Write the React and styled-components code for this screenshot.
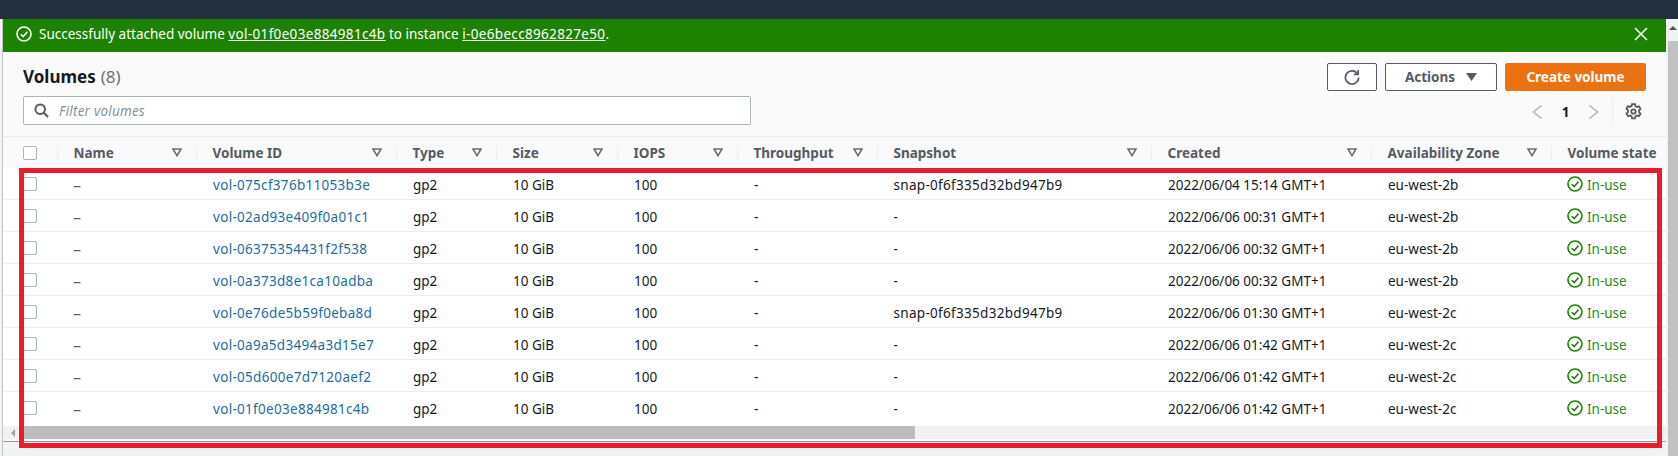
import React from "react";
import styled, { createGlobalStyle } from "styled-components";

const columns = "54px 139px 200px 100px 121px 120px 140px 274px 220px 180px 115px";

const volumes = [
  ["vol-075cf376b11053b3e", "snap-0f6f335d32bd947b9", "2022/06/04 15:14 GMT+1", "eu-west-2b"],
  ["vol-02ad93e409f0a01c1", "-", "2022/06/06 00:31 GMT+1", "eu-west-2b"],
  ["vol-06375354431f2f538", "-", "2022/06/06 00:32 GMT+1", "eu-west-2b"],
  ["vol-0a373d8e1ca10adba", "-", "2022/06/06 00:32 GMT+1", "eu-west-2b"],
  ["vol-0e76de5b59f0eba8d", "snap-0f6f335d32bd947b9", "2022/06/06 01:30 GMT+1", "eu-west-2c"],
  ["vol-0a9a5d3494a3d15e7", "-", "2022/06/06 01:42 GMT+1", "eu-west-2c"],
  ["vol-05d600e7d7120aef2", "-", "2022/06/06 01:42 GMT+1", "eu-west-2c"],
  ["vol-01f0e03e884981c4b", "-", "2022/06/06 01:42 GMT+1", "eu-west-2c"],
];

const headers = [
  ["Name", true],
  ["Volume ID", true],
  ["Type", true],
  ["Size", true],
  ["IOPS", true],
  ["Throughput", true],
  ["Snapshot", true],
  ["Created", true],
  ["Availability Zone", true],
  ["Volume state", false],
];

const GlobalStyle = createGlobalStyle`
  html, body {
    margin: 0;
    padding: 0;
    background: #f2f3f3;
  }
`;

const Page = styled.div`
  width: 1678px;
  height: 456px;
  overflow: hidden;
  position: relative;
  display: flex;
  flex-direction: column;
  font-family: "Noto Sans", sans-serif;
  font-size: 13.5px;
  color: #16191f;
`;

const TopBar = styled.div`
  height: 19px;
  flex: none;
  background: #232f3e;
`;

const Body = styled.div`
  flex: 1;
  display: flex;
  min-height: 0;
`;

const LeftEdge = styled.div`
  width: 2px;
  flex: none;
  background: #f2f3f3;
  border-right: 1px solid #c4c6c6;
`;

const Main = styled.div`
  width: 1663px;
  flex: none;
  background: #fafafa;
  display: flex;
  flex-direction: column;
`;

const PageScroll = styled.div`
  margin-left: 2px;
  width: 10px;
  flex: none;
  display: flex;
  flex-direction: column;
  background: #c1c1c1;
`;

const ScrollTop = styled.div`
  height: 22px;
  background: #f1f1f1;
  display: flex;
  justify-content: center;
  padding-top: 7px;
  box-sizing: border-box;
  &::after {
    content: "";
    width: 0;
    height: 0;
    border-left: 4px solid transparent;
    border-right: 4px solid transparent;
    border-bottom: 4px solid #505050;
  }
`;

const Banner = styled.div`
  height: 33px;
  flex: none;
  box-sizing: border-box;
  background: #1d8102;
  color: #fff;
  display: flex;
  align-items: center;
  padding: 0 18px 3px 13px;
  gap: 7px;
  font-size: 13.5px;
`;

const BannerText = styled.span`
  flex: 1;
`;

const BannerLink = styled.a`
  color: #fff;
  text-decoration: underline;
  letter-spacing: 0.33px;
`;

const Toolbar = styled.div`
  height: 85px;
  flex: none;
  box-sizing: border-box;
  padding: 11px 20px 11px 20px;
  display: flex;
  justify-content: space-between;
  border-bottom: 1px solid #eaeded;
`;

const ToolLeft = styled.div`
  display: flex;
  flex-direction: column;
  gap: 6px;
`;

const Title = styled.div`
  height: 28px;
  display: flex;
  align-items: center;
  font-size: 17px;
  font-weight: 700;
  gap: 5px;
`;

const Count = styled.span`
  font-weight: 400;
  color: #687078;
`;

const FilterBox = styled.div`
  width: 728px;
  height: 29px;
  box-sizing: border-box;
  background: #fff;
  border: 1px solid #aab7b8;
  border-radius: 2px;
  display: flex;
  align-items: center;
  padding-left: 10px;
  gap: 10px;
`;

const Placeholder = styled.span`
  font-style: italic;
  color: #879596;
  letter-spacing: 0.2px;
`;

const ToolRight = styled.div`
  display: flex;
  flex-direction: column;
  align-items: flex-end;
  gap: 6px;
`;

const Buttons = styled.div`
  display: flex;
  gap: 8px;
  height: 28px;
`;

const Button = styled.button`
  box-sizing: border-box;
  width: ${(p) => p.$width}px;
  height: 28px;
  padding: 0;
  background: #fff;
  border: 1px solid #545b64;
  border-radius: 2px;
  color: #545b64;
  font-family: inherit;
  font-size: 13.5px;
  font-weight: 700;
  display: flex;
  align-items: center;
  justify-content: center;
  gap: 11px;
`;

const PrimaryButton = styled(Button)`
  background: #ec7211;
  border-color: #ec7211;
  color: #fff;
`;

const Pager = styled.div`
  height: 29px;
  padding-right: 4px;
  display: flex;
  align-items: center;
  color: #16191f;
  font-weight: 700;
`;

const PagerNumber = styled.span`
  width: 45px;
  text-align: center;
`;

const PagerDivider = styled.span`
  width: 1px;
  height: 29px;
  background: #eaeded;
  margin: 0 12px 0 13px;
`;

const Table = styled.div`
  flex: none;
`;

const HeadRow = styled.div`
  display: grid;
  grid-template-columns: ${columns};
  height: 31px;
  align-items: center;
  background: #fafafa;
`;

const HeadCell = styled.div`
  height: 14px;
  display: flex;
  align-items: center;
  justify-content: space-between;
  padding: 0 14px 0 15.5px;
  border-left: 1px solid #eaeded;
  color: #545b64;
  font-weight: 700;
  white-space: nowrap;
`;

const CheckCell = styled.div`
  padding-left: 20px;
  display: flex;
  align-items: center;
`;

const Checkbox = styled.span`
  width: 14px;
  height: 14px;
  box-sizing: border-box;
  background: #fff;
  border: 1px solid #aab7b8;
  border-radius: 2px;
`;

const Row = styled.div`
  display: grid;
  grid-template-columns: ${columns};
  height: 32px;
  box-sizing: border-box;
  align-items: center;
  background: #fff;
  border-bottom: 1px solid #eaeded;
  &:last-child {
    border-bottom: none;
    height: 34px;
    padding-bottom: 2px;
  }
`;

const Cell = styled.div`
  padding: 2px 0 0 17px;
  white-space: nowrap;
`;

const NameCell = styled(Cell)`
  padding-left: 16px;
  font-size: 16px;
  line-height: 18px;
  color: #545b64;
`;

const SnapshotCell = styled(Cell)`
  padding-left: 16.5px;
  letter-spacing: ${(p) => (p.$id ? "0.3px" : "0")};
`;

const VolumeLink = styled.a`
  color: #1f6b9e;
  letter-spacing: 0.3px;
`;

const Status = styled(Cell)`
  display: flex;
  align-items: center;
  gap: 4px;
  padding: 0 0 0 16px;
  color: #2b8a1c;
`;

const StatusText = styled.span`
  padding-top: 2px;
`;

const BottomScroll = styled.div`
  height: 13px;
  background: #f1f1f1;
  display: flex;
  align-items: center;
`;

const ScrollLeft = styled.div`
  width: 19px;
  display: flex;
  padding-left: 8px;
  box-sizing: border-box;
  &::after {
    content: "";
    width: 0;
    height: 0;
    border-top: 4px solid transparent;
    border-bottom: 4px solid transparent;
    border-right: 4px solid #a0a0a0;
  }
`;

const ScrollThumb = styled.div`
  width: 893px;
  height: 13px;
  background: #bcbcbc;
`;

const BottomLine = styled.div`
  margin-top: 2px;
  height: 1px;
  background: #9a9d9d;
`;

const Footer = styled.div`
  flex: 1;
  background: #f2f3f3;
`;

// red annotation drawn over the screenshot
const Annotation = styled.div`
  position: absolute;
  left: 19px;
  top: 168px;
  width: 1643px;
  height: 280px;
  box-sizing: border-box;
  border: 5px solid #e81c2a;
  pointer-events: none;
`;

const CircleCheck = ({ size = 16, color = "#fff" }) => (
  <svg width={size} height={size} viewBox="0 0 16 16" fill="none" stroke={color} strokeWidth="1.6">
    <circle cx="8" cy="8" r="7" />
    <path d="M4.8 8.2 7.2 10.6 11.4 5.8" />
  </svg>
);

const CloseIcon = () => (
  <svg width="14" height="14" viewBox="0 0 14 14" fill="none" stroke="#fff" strokeWidth="1.5">
    <path d="M1 1 13 13M13 1 1 13" />
  </svg>
);

const SearchIcon = () => (
  <svg width="15" height="15" viewBox="0 0 15 15" fill="none" stroke="#545b64" strokeWidth="2">
    <circle cx="6.2" cy="6.2" r="4.8" />
    <path d="M9.8 9.8 14 14" />
  </svg>
);

const RefreshIcon = () => (
  <svg width="16" height="16" viewBox="0 0 16 16" fill="none" stroke="#545b64" strokeWidth="1.7">
    <path d="M13.6 5A6.6 6.6 0 1 0 14.6 8.4" />
    <path d="M14.2 1v4.4H9.8" />
  </svg>
);

const CaretDown = () => (
  <svg width="11" height="8" viewBox="0 0 11 8" fill="#545b64">
    <path d="M0 0h11L5.5 8z" />
  </svg>
);

const FilterIcon = () => (
  <svg width="10" height="9" viewBox="0 0 10 9" fill="none" stroke="#687078" strokeWidth="1.6">
    <path d="M1 1h8L5 7.6z" />
  </svg>
);

const Chevron = ({ flip }) => (
  <svg width="11" height="14" viewBox="0 0 11 14" fill="none" stroke="#aab7b8" strokeWidth="1.5">
    <path d={flip ? "M1.5 0.5l8 6.5-8 6.5" : "M9.5 0.5 1.5 7l8 6.5"} />
  </svg>
);

const GearIcon = () => (
  <svg width="17" height="17" viewBox="0 0 17 17" fill="none" stroke="#545b64" strokeWidth="1.8">
    <circle cx="8.5" cy="8.5" r="2.2" />
    <path d="M7 1.2h3l.4 2 1.6.9 2-.7 1.5 2.6-1.5 1.4v1.8l1.5 1.4-1.5 2.6-2-.7-1.6.9-.4 2H7l-.4-2-1.6-.9-2 .7-1.5-2.6 1.5-1.4V7.2L1.5 5.8 3 3.2l2 .7 1.6-.9z" />
  </svg>
);

export default function App() {
  return (
    <Page>
      <GlobalStyle />
      <TopBar />
      <Body>
        <LeftEdge />
        <Main>
          <Banner>
            <CircleCheck />
            <BannerText>
              Successfully attached volume <BannerLink>vol-01f0e03e884981c4b</BannerLink> to instance{" "}
              <BannerLink>i-0e6becc8962827e50</BannerLink>.
            </BannerText>
            <CloseIcon />
          </Banner>
          <Toolbar>
            <ToolLeft>
              <Title>
                Volumes <Count>(8)</Count>
              </Title>
              <FilterBox>
                <SearchIcon />
                <Placeholder>Filter volumes</Placeholder>
              </FilterBox>
            </ToolLeft>
            <ToolRight>
              <Buttons>
                <Button $width={50}>
                  <RefreshIcon />
                </Button>
                <Button $width={112}>
                  Actions <CaretDown />
                </Button>
                <PrimaryButton $width={141}>Create volume</PrimaryButton>
              </Buttons>
              <Pager>
                <Chevron />
                <PagerNumber>1</PagerNumber>
                <Chevron flip />
                <PagerDivider />
                <GearIcon />
              </Pager>
            </ToolRight>
          </Toolbar>
          <Table>
            <HeadRow>
              <CheckCell>
                <Checkbox />
              </CheckCell>
              {headers.map(([label, filter]) => (
                <HeadCell key={label}>
                  {label}
                  {filter && <FilterIcon />}
                </HeadCell>
              ))}
            </HeadRow>
            {volumes.map(([id, snapshot, created, zone]) => (
              <Row key={id}>
                <CheckCell>
                  <Checkbox />
                </CheckCell>
                <NameCell>–</NameCell>
                <Cell>
                  <VolumeLink>{id}</VolumeLink>
                </Cell>
                <Cell>gp2</Cell>
                <Cell>10 GiB</Cell>
                <Cell>100</Cell>
                <Cell>-</Cell>
                <SnapshotCell $id={snapshot !== "-"}>{snapshot}</SnapshotCell>
                <Cell>{created}</Cell>
                <Cell>{zone}</Cell>
                <Status>
                  <CircleCheck size={16} color="#1d8102" />
                  <StatusText>In-use</StatusText>
                </Status>
              </Row>
            ))}
          </Table>
          <BottomScroll>
            <ScrollLeft />
            <ScrollThumb />
          </BottomScroll>
          <BottomLine />
          <Footer />
        </Main>
        <PageScroll>
          <ScrollTop />
        </PageScroll>
      </Body>
      <Annotation />
    </Page>
  );
}
